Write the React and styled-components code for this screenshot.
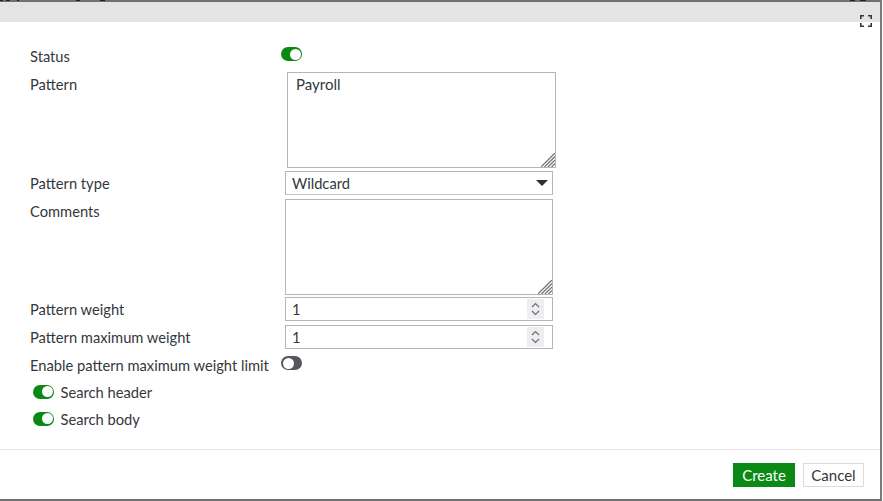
import React from "react";
import styled, { createGlobalStyle } from "styled-components";

const Global = createGlobalStyle`
  html, body { margin: 0; padding: 0; background: #fff; }
  body { font-family: Lato, "Open Sans", sans-serif; color: #33383d; font-size: 14.7px; }
  * { box-sizing: border-box; }
`;

const Dialog = styled.div`
  width: 882px;
  height: 501px;
  display: flex;
  flex-direction: column;
  background: #fff;
  border-right: 2px solid #7a7a7a;
  border-bottom: 2px solid #6f6f6f;
  overflow: hidden;
`;

const TopEdge = styled.div`
  height: 2px;
  flex: none;
  background:
    linear-gradient(90deg,
      #222 0 3px, transparent 3px 6px, #222 6px 10px, transparent 10px 17px, #222 17px 19px, transparent 19px 76px,
      #222 76px 80px, transparent 80px 100px, #222 100px 105px, transparent 105px 850px, #222 850px 855px, transparent 855px 860px, #222 860px 866px, transparent 866px) top / 100% 1px no-repeat,
    #707070;
`;

const Header = styled.div`
  height: 20px;
  flex: none;
  background: #e4e4e4;
`;

const ExpandBar = styled.div`
  height: 12px;
  flex: none;
  display: flex;
  justify-content: flex-end;
  padding-right: 8px;
  margin-top: -7px;
  position: relative;
`;

const Body = styled.div`
  flex: 1;
  display: flex;
  flex-direction: column;
  padding: 17px 0 0 30px;
`;

const Row = styled.div`
  display: grid;
  grid-template-columns: 255px 268px;
  align-items: start;
  height: ${(p) => p.$h}px;
`;

const Label = styled.div`
  font-size: 14.7px;
  line-height: 20px;
  padding-top: ${(p) => p.$top || 0}px;
`;

const Switch = styled.span`
  display: block;
  position: relative;
  width: 21px;
  height: 14px;
  border-radius: 7px;
  background: ${(p) => (p.$on ? "#0a8a14" : "#55585c")};
  flex: none;
  margin-left: ${(p) => p.$ml ?? -4}px;
  margin-top: ${(p) => p.$mt ?? 0}px;
  &::after {
    content: "";
    position: absolute;
    top: 1.5px;
    left: ${(p) => (p.$on ? "9px" : "1.5px")};
    width: 11px;
    height: 11px;
    border-radius: 50%;
    background: #fff;
  }
`;

const AreaWrap = styled.div`
  position: relative;
  width: ${(p) => p.$w}px;
  height: 96px;
  margin-left: ${(p) => p.$ml || 0}px;
`;

const Area = styled.textarea`
  display: block;
  width: 100%;
  height: 100%;
  resize: none;
  border: 1px solid #b5b5b5;
  border-radius: 0;
  padding: 1px 8px;
  font: 15px/20px Lato, sans-serif;
  color: #33383d;
  background: #fff;
  outline: none;
`;

const Grip = styled.svg`
  position: absolute;
  right: 1px;
  bottom: 1px;
  display: block;
`;

const SelectBox = styled.div`
  width: 268px;
  height: 24px;
  border: 1px solid #b5b5b5;
  border-bottom-color: #c4c4c4;
  display: flex;
  align-items: center;
  justify-content: space-between;
  padding: 0 4px 0 6px;
  font-size: 14.7px;
`;

const Caret = styled.span`
  width: 0;
  height: 0;
  border-left: 6.5px solid transparent;
  border-right: 6.5px solid transparent;
  border-top: 6px solid #2b2f33;
`;

const NumberBox = styled.div`
  width: 268px;
  height: 24px;
  border: 1px solid #b5b5b5;
  display: flex;
  align-items: center;
  justify-content: space-between;
  padding: 0 8px 0 6px;
  font-size: 14.7px;
`;

const Spin = styled.span`
  width: 17px;
  height: 20px;
  background: #eeeef1;
  display: flex;
  align-items: center;
  justify-content: center;
`;

const ToggleRow = styled.div`
  display: flex;
  align-items: center;
  gap: 6.5px;
  height: 27px;
  padding-left: 3px;
  font-size: 14.7px;
  line-height: 20px;
`;

const Footer = styled.div`
  height: 50px;
  flex: none;
  border-top: 1px solid #e6e6e6;
  display: flex;
  justify-content: flex-end;
  align-items: flex-start;
  gap: 8px;
  padding: 13px 16px 0 0;
`;

const Button = styled.button`
  height: 24px;
  padding: 0;
  width: ${(p) => p.$w}px;
  font: 15px/20px Lato, sans-serif;
  border: 1px solid ${(p) => (p.$primary ? "#0a8a14" : "#dcdcdc")};
  background: ${(p) => (p.$primary ? "#0a8a14" : "#fff")};
  color: ${(p) => (p.$primary ? "#fff" : "#33383d")};
`;

const SpinIcon = () => (
  <svg width="11" height="16" viewBox="0 0 11 16" fill="none" stroke="#6b6f78" strokeWidth="1.2">
    <path d="M2 6l3.5-3.5L9 6" />
    <path d="M2 10l3.5 3.5L9 10" />
  </svg>
);

const ExpandIcon = () => (
  <svg width="12" height="12" viewBox="0 0 12 12" fill="none" stroke="#2a3a4a" strokeWidth="1.6">
    <path d="M.8 4V.8H4M8 .8h3.2V4M11.2 8v3.2H8M4 11.2H.8V8" />
  </svg>
);

const GripIcon = () => (
  <Grip width="14" height="14" viewBox="0 0 14 14" fill="none" stroke="#777" strokeWidth="1.3">
    <path d="M0 14L14 0M3.5 14L14 3.5M7 14l7-7M10.5 14l3.5-3.5" />
  </Grip>
);

export default function App() {
  return (
    <>
      <Global />
      <Dialog>
        <TopEdge />
        <Header />
        <ExpandBar>
          <ExpandIcon />
        </ExpandBar>
        <Body>
          <Row $h={28}>
            <Label $top={2}>Status</Label>
            <Switch $on $mt={3} />
          </Row>
          <Row $h={99}>
            <Label $top={2}>Pattern</Label>
            <AreaWrap $w={269} $ml={2}>
              <Area defaultValue="Payroll" />
              <GripIcon />
            </AreaWrap>
          </Row>
          <Row $h={28}>
            <Label $top={2}>Pattern type</Label>
            <SelectBox>
              Wildcard
              <Caret />
            </SelectBox>
          </Row>
          <Row $h={98}>
            <Label $top={2}>Comments</Label>
            <AreaWrap $w={268}>
              <Area />
              <GripIcon />
            </AreaWrap>
          </Row>
          <Row $h={28}>
            <Label $top={2}>Pattern weight</Label>
            <NumberBox>
              1
              <Spin><SpinIcon /></Spin>
            </NumberBox>
          </Row>
          <Row $h={28}>
            <Label $top={2}>Pattern maximum weight</Label>
            <NumberBox>
              1
              <Spin><SpinIcon /></Spin>
            </NumberBox>
          </Row>
          <Row $h={25}>
            <Label $top={2}>Enable pattern maximum weight limit</Label>
            <Switch $mt={3} />
          </Row>
          <ToggleRow>
            <Switch $on $ml={0} />
            Search header
          </ToggleRow>
          <ToggleRow>
            <Switch $on $ml={0} />
            Search body
          </ToggleRow>
        </Body>
        <Footer>
          <Button $primary $w={62}>Create</Button>
          <Button $w={61}>Cancel</Button>
        </Footer>
      </Dialog>
    </>
  );
}
